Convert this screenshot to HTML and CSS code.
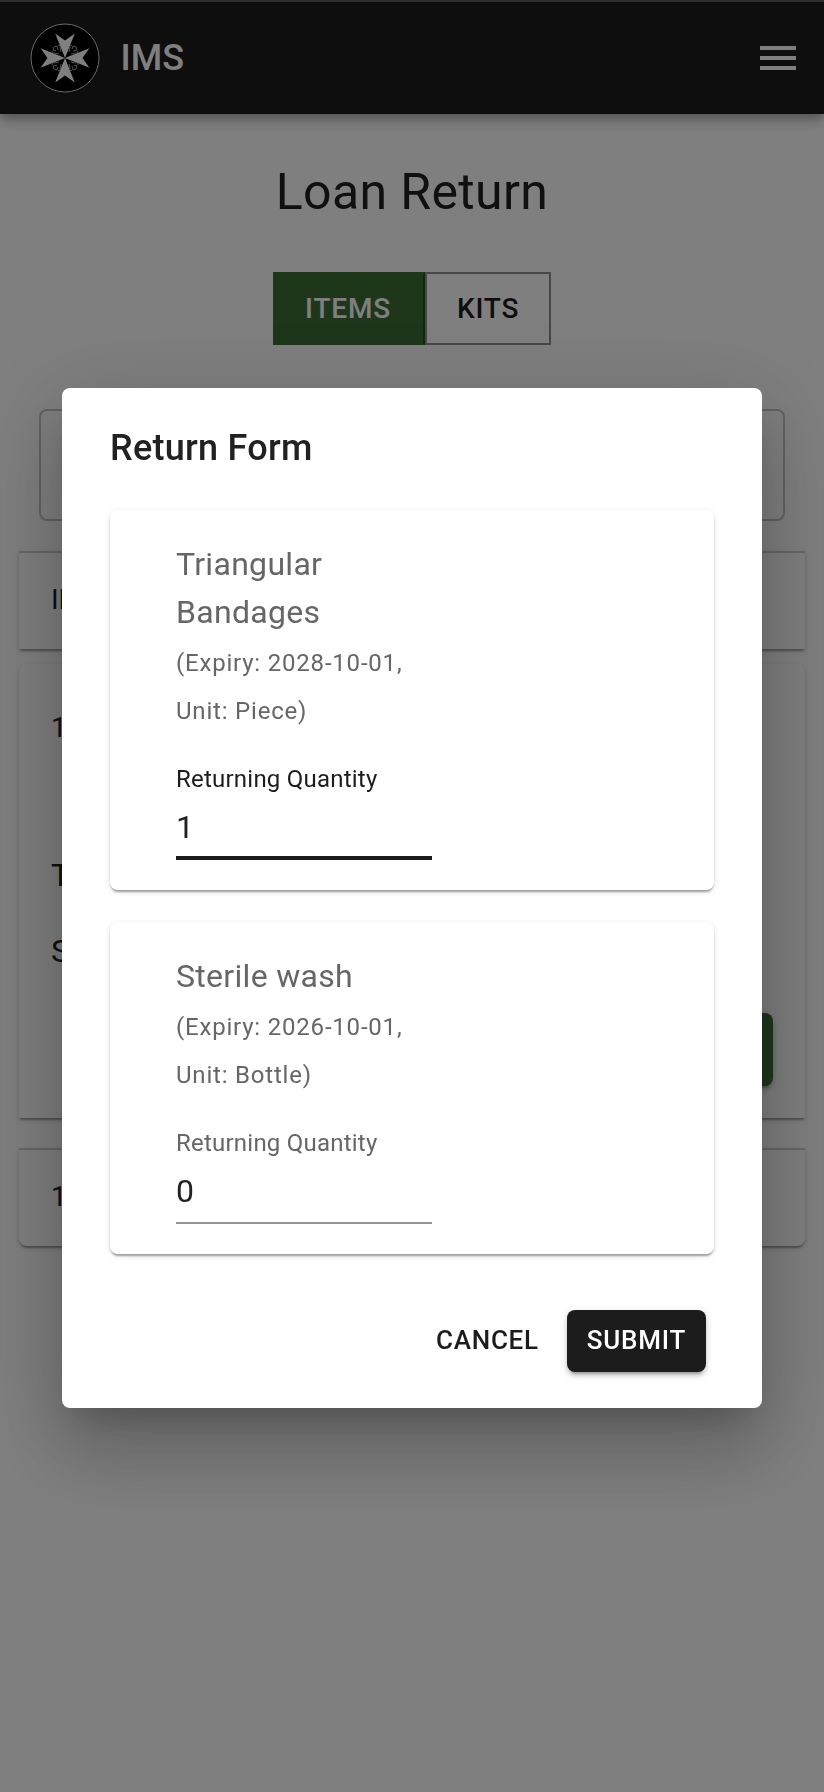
FILE: index.html
```html
<!DOCTYPE html>
<html lang="en">
<head>
<meta charset="utf-8">
<title>IMS – Loan Return</title>
<link rel="stylesheet" href="styles.css">
</head>
<body>
<div class="page">
  <header class="app-bar">
    <div class="brand">
      <svg class="logo" viewBox="0 0 70 70">
        <circle cx="35" cy="35" r="34" fill="#000" stroke="#d0d0d0" stroke-width="1"/>
        <g fill="none" stroke="#a0a0a0" stroke-width="1">
          <g id="scroll"><path d="M31 29l-1-5M29 31l-5-1M28 27l-1-4-3 1M26 28l-3-1 1-3M30 23l-2-1M23 30l-1-2"/></g>
          <use href="#scroll" transform="rotate(90 35 35)"/>
          <use href="#scroll" transform="rotate(180 35 35)"/>
          <use href="#scroll" transform="rotate(270 35 35)"/>
        </g>
        <g fill="#fff">
          <path id="arm" d="M35 35L31 25L25.200 10.600l9.800 6.900 9.800-6.900L39 25z"/>
          <use href="#arm" transform="rotate(90 35 35)"/>
          <use href="#arm" transform="rotate(180 35 35)"/>
          <use href="#arm" transform="rotate(270 35 35)"/>
        </g>
      </svg>
      <span class="brand-name">IMS</span>
    </div>
    <svg class="menu-icon" viewBox="0 0 36 24"><path fill="#fff" d="M0 0h36v4H0zM0 10h36v4H0zM0 20h36v4H0z"/></svg>
  </header>
  <main class="content">
    <h1 class="page-title">Loan Return</h1>
    <div class="toggle">
      <button class="toggle-button selected">Items</button>
      <button class="toggle-button">Kits</button>
    </div>
    <div class="search"></div>
    <div class="loans">
      <section class="loan ruled"><span class="loan-id">ID</span></section>
      <section class="loan expanded">
        <span class="loan-id">1</span>
        <p class="loan-line first">T</p>
        <p class="loan-line">S</p>
        <button class="return-button"></button>
      </section>
      <section class="loan ruled last"><span class="loan-id">1</span></section>
    </div>
  </main>
</div>
<div class="backdrop">
  <div class="dialog">
    <h2 class="dialog-title">Return Form</h2>
    <div class="card">
      <div class="field">
        <p class="item-name">Triangular Bandages</p>
        <p class="item-meta">(Expiry: 2028-10-01, Unit: Piece)</p>
        <div class="label focused">Returning Quantity</div>
        <div class="value focused">1</div>
      </div>
    </div>
    <div class="card">
      <div class="field">
        <p class="item-name">Sterile wash</p>
        <p class="item-meta">(Expiry: 2026-10-01, Unit: Bottle)</p>
        <div class="label">Returning Quantity</div>
        <div class="value">0</div>
      </div>
    </div>
    <div class="actions">
      <button class="button">Cancel</button>
      <button class="button primary">Submit</button>
    </div>
  </div>
</div>
</body>
</html>
```
FILE: styles.css
```css
* { box-sizing: border-box; }
body { margin: 0; background: #fff; color: #212121; font-family: Roboto, "Liberation Sans", sans-serif; }
h1, h2, p { margin: 0; }
button { border: 0; font-family: inherit; text-transform: uppercase; font-weight: 500; }
.page { height: 1792px; overflow: hidden; }

.app-bar {
  height: 114px; padding: 0 28px 0 30px; border-top: 2px solid #5c5c5c;
  display: flex; align-items: center; justify-content: space-between;
  background: #1c1c1c; color: #fff; position: relative;
  box-shadow: 0 4px 8px -2px rgba(0,0,0,.2), 0 8px 10px rgba(0,0,0,.14), 0 2px 20px rgba(0,0,0,.12);
}
.brand { display: flex; align-items: center; gap: 20.500px; }
.logo { width: 70px; height: 70px; }
.brand-name { font-size: 36px; font-weight: 500; line-height: 58px; padding-bottom: 1px; }
.menu-icon { width: 36px; height: 24px; }

.content { display: flex; flex-direction: column; align-items: center; }
.page-title { margin-top: 45px; font-size: 50px; line-height: 66px; font-weight: 400; letter-spacing: .37px; }
.toggle { display: flex; margin-top: 47px; }
.toggle-button { height: 73px; padding: 0 30px; border: 2px solid #8e8e8e; background: transparent; color: #1c1c1c; font-size: 28px; letter-spacing: .8px; }
.toggle-button:last-child { width: 126px; }
.toggle-button.selected { width: 152px; padding: 0 31px 0 29px; background: #3c6e37; border-color: #3c6e37; border-right-color: #274824; color: #fff; }
.search { width: 746px; height: 112px; margin-top: 64px; border: 2px solid #c4c4c4; border-radius: 8px; }

.loans { width: 786px; margin-top: 30px; display: flex; flex-direction: column; }
.loan {
  padding: 0 32px; background: #fff;
  box-shadow: 0 4px 2px -2px rgba(0,0,0,.2), 0 2px 2px rgba(0,0,0,.14), 0 2px 6px rgba(0,0,0,.12);
}
.loan.ruled { height: 98px; border-top: 2px solid #cfcfcf; }
.loan.expanded { height: 454px; margin: 15px 0 30px; border-radius: 8px 8px 0 0; display: flex; flex-direction: column; }
.loan.last { border-radius: 0 0 8px 8px; }
.loan-id { display: block; font-size: 28px; line-height: 94px; }
.loan.expanded .loan-id { line-height: 128px; }
.loan-line { font-size: 32px; line-height: 76px; }
.loan-line.first { margin-top: 45px; }
.return-button { align-self: flex-end; width: 160px; height: 73px; margin-top: 24px; background: #3c6e37; border-radius: 8px; box-shadow: 0 6px 2px -4px rgba(0,0,0,.2), 0 4px 4px rgba(0,0,0,.14), 0 2px 10px rgba(0,0,0,.12); }

.backdrop { position: fixed; inset: 0; background: rgba(0,0,0,.5); padding: 388px 62px 384px; }
.dialog {
  height: 1020px; padding: 31px 48px; background: #fff; border-radius: 8px;
  box-shadow: 0 22px 30px -14px rgba(0,0,0,.2), 0 48px 76px 6px rgba(0,0,0,.14), 0 18px 92px 16px rgba(0,0,0,.12);
}
.dialog-title { font-size: 36px; line-height: 58px; font-weight: 500; letter-spacing: .27px; margin-bottom: 33px; }
.card {
  padding: 30px 66px; margin-bottom: 32px; border-radius: 8px;
  box-shadow: 0 4px 2px -2px rgba(0,0,0,.2), 0 2px 2px rgba(0,0,0,.14), 0 2px 6px rgba(0,0,0,.12);
}
.field { width: 256px; }
.item-name { color: #666; font-size: 32px; line-height: 48px; letter-spacing: .3px; }
.item-meta { margin-top: 3px; color: #666; font-size: 24px; line-height: 48px; letter-spacing: .8px; }
.label { margin-top: 26px; color: #666; font-size: 24px; line-height: 36px; letter-spacing: .225px; }
.label.focused { color: #1c1c1c; }
.value { height: 63px; padding-top: 7px; border-bottom: 2px solid #949494; font-size: 32px; line-height: 46px; }
.value.focused { border-bottom: 4px solid #1c1c1c; }
.actions { display: flex; justify-content: flex-end; gap: 16px; margin-top: 56px; padding-right: 8px; }
.button { height: 62px; padding: 0 12px 2px; background: transparent; color: #1c1c1c; border-radius: 8px; font-size: 26px; letter-spacing: .74px; }
.button.primary { padding: 0 20px 2px; background: #1c1c1c; color: #fff; box-shadow: 0 6px 2px -4px rgba(0,0,0,.2), 0 4px 4px rgba(0,0,0,.14), 0 2px 10px rgba(0,0,0,.12); }
```
